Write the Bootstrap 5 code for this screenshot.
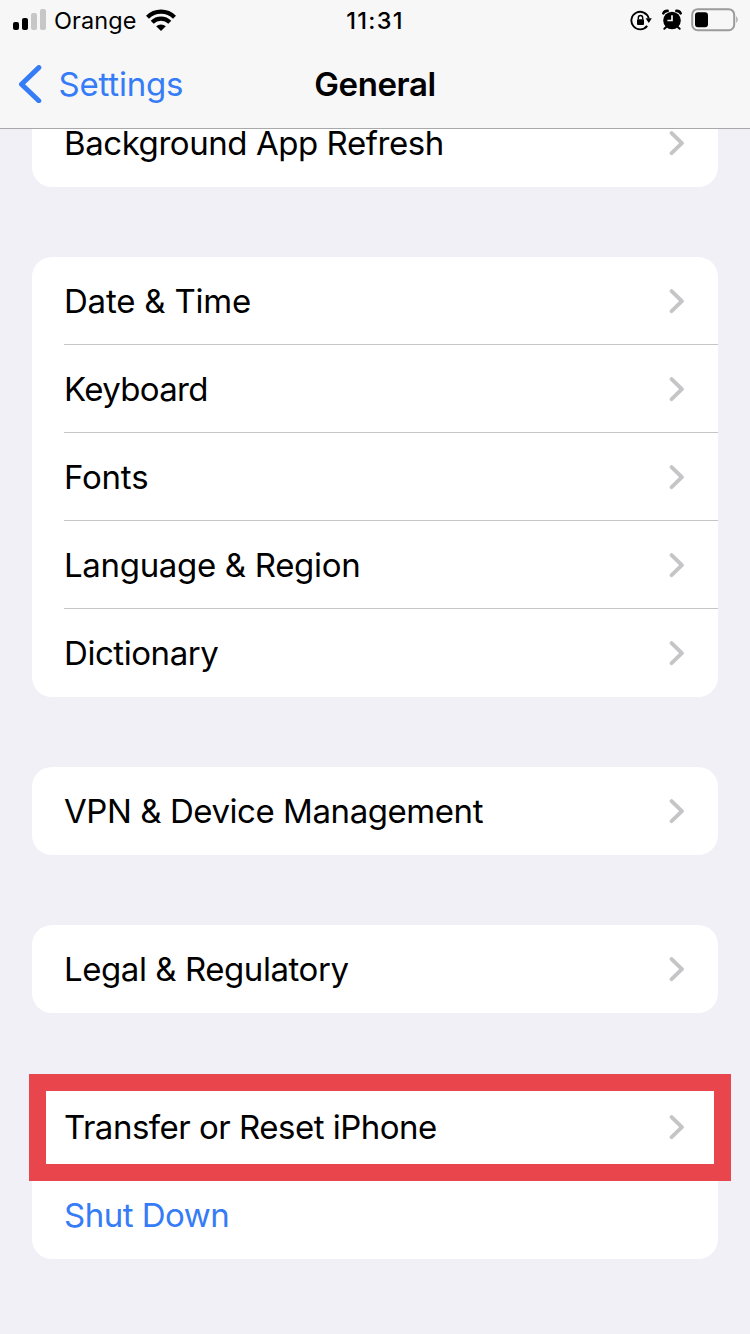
<!DOCTYPE html>
<html lang="en">
<head>
<meta charset="utf-8">
<meta name="viewport" content="width=device-width, initial-scale=1">
<title>General</title>
<link href="https://cdn.jsdelivr.net/npm/bootstrap@5.3.0/dist/css/bootstrap.min.css" rel="stylesheet">
<style>
html, body { height: 1334px; overflow: hidden; }
body { background: #f1f0f6; color: #000; font-family: Inter, "Liberation Sans", sans-serif; font-size: 33px; line-height: 40px; }
svg { display: block; flex: none; }
.top-bar { height: 129px; background: #f7f7f8; border-bottom: 1px solid #a9a9ac; z-index: 2; }
.status-row { height: 40px; font-size: 23.5px; padding: 0 11px 0 13px; }
.title-row { height: 88px; }
.ios-blue { color: #357cf6; }
.side { flex: 1 1 0; }
.carrier { letter-spacing: .1px; padding-top: 1px; }
.clock { font-weight: 550; letter-spacing: 1.3px; padding-top: 2px; margin-right: 2px; }
.page-title { font-weight: 600; font-size: 33px; letter-spacing: -.4px; padding-top: 2px; margin-right: 1px; }
.back { margin-left: 16.5px; letter-spacing: -.2px; }
.settings-groups { padding: 0 32px; gap: 70px; margin-top: -30px; letter-spacing: -.44px; }
.settings-groups .list-group { --bs-list-group-border-radius: 20px; --bs-list-group-border-width: 0; --bs-list-group-bg: #fff; border-radius: 20px; background: #fff; }
.settings-groups .list-group-item { height: 88px; padding: 0 33px 0 32px; color: #000; background-color: transparent; }
.settings-groups .list-group-item.ios-blue { color: #357cf6; }
.list-group-item.ruled { background: linear-gradient(#c6c6c8, #c6c6c8) 32px 100% / 100% 1px no-repeat; }
.callout-frame { left: -3.5px; right: -13px; top: -9px; height: 107px; border: 17px solid #e8464c; z-index: 3; }
.wide { letter-spacing: -.2px; }
.mid { letter-spacing: -.32px; }
.tight { letter-spacing: -.5px; }
.tighter { letter-spacing: -.65px; }
</style>
</head>
<body>
<header class="top-bar position-relative">
  <div class="status-row d-flex align-items-center">
    <div class="side d-flex align-items-center">
      <svg width="33" height="22" viewBox="0 0 33 22"><rect y="13" width="6" height="8" rx="2"/><rect x="9" y="9" width="6" height="12" rx="2"/><g fill="#c7c7c8"><rect x="18" y="4" width="6" height="17" rx="2"/><rect x="27" width="6" height="21" rx="2"/></g></svg>
      <span class="carrier ms-2">Orange</span>
      <svg class="wifi" style="margin-left:9px" width="30" height="22" viewBox="0 0 30 22"><g fill="none" stroke="#000" stroke-width="4.2"><path d="M1.5 8.2a19 19 0 0 1 27 0"/><path d="M6.2 13.2a12.5 12.5 0 0 1 17.6 0"/></g><path d="M10.2 17.3a7 7 0 0 1 9.6 0L15 22z"/></svg>
    </div>
    <span class="clock">11:31</span>
    <div class="side d-flex align-items-center justify-content-end">
      <svg width="22" height="22" viewBox="0 0 22 22"><path d="M17.2 16.9a8.8 8.8 0 1 1 1.5-7.6" fill="none" stroke="#000" stroke-width="1.9"/><path d="M15.6 9.3h6.2l-3 4.6z"/><rect x="7" y="10.2" width="7" height="5.8" rx="1"/><path d="M8.3 10.5V8.7a2.2 2.2 0 0 1 4.4 0v1.8" fill="none" stroke="#000" stroke-width="1.4"/></svg>
      <svg style="margin-left:10px" width="20" height="22" viewBox="0 0 20 22"><circle cx="10" cy="11.5" r="8.8"/><path d="M1.4 4.3Q2.6 1.7 5.6 1.9M18.6 4.3Q17.4 1.7 14.4 1.9" fill="none" stroke="#000" stroke-width="2.6" stroke-linecap="round"/><path d="M4.3 18l-2 1.8M15.7 18l2 1.8" stroke="#000" stroke-width="2" stroke-linecap="round"/><path d="M10 6.2v5.3H5.4" fill="none" stroke="#f7f7f8" stroke-width="1.7"/></svg>
      <svg style="margin-left:9px" width="48" height="24" viewBox="0 0 48 24"><rect x="1.2" y="1.2" width="42" height="21" rx="5.5" fill="none" stroke="#9b9b9b" stroke-width="2"/><rect x="4" y="4.2" width="13" height="15" rx="3"/><path d="M45.3 8q2.7 3.5 0 7z" fill="#9b9b9b"/></svg>
    </div>
  </div>
  <div class="title-row d-flex align-items-center">
    <div class="side d-flex align-items-center ios-blue"><svg style="margin-left:19px" width="23" height="38" viewBox="0 0 23 38"><path d="M19.8 2.6L2.5 19.2 19.8 35.8" fill="none" stroke="currentColor" stroke-width="5" stroke-linecap="round" stroke-linejoin="round"/></svg><span class="back">Settings</span></div>
    <h1 class="page-title m-0">General</h1>
    <div class="side"></div>
  </div>
</header>
<svg class="d-none"><symbol id="chev" viewBox="0 0 16 26"><path d="M2.6 3.1l10.3 10.1-10.3 10" fill="none" stroke="#c5c5c7" stroke-width="3.9" stroke-linecap="round" stroke-linejoin="round"/></symbol></svg>
<main class="settings-groups d-flex flex-column position-relative">
  <div class="list-group"><a class="list-group-item d-flex align-items-center justify-content-between"><span>Background App Refresh</span><svg width="16" height="26"><use href="#chev"/></svg></a></div>
  <div class="list-group">
    <a class="list-group-item ruled d-flex align-items-center justify-content-between"><span class="wide">Date &amp; Time</span><svg width="16" height="26"><use href="#chev"/></svg></a>
    <a class="list-group-item ruled d-flex align-items-center justify-content-between"><span class="tighter">Keyboard</span><svg width="16" height="26"><use href="#chev"/></svg></a>
    <a class="list-group-item ruled d-flex align-items-center justify-content-between"><span class="wide">Fonts</span><svg width="16" height="26"><use href="#chev"/></svg></a>
    <a class="list-group-item ruled d-flex align-items-center justify-content-between"><span class="mid">Language &amp; Region</span><svg width="16" height="26"><use href="#chev"/></svg></a>
    <a class="list-group-item d-flex align-items-center justify-content-between"><span>Dictionary</span><svg width="16" height="26"><use href="#chev"/></svg></a>
  </div>
  <div class="list-group"><a class="list-group-item d-flex align-items-center justify-content-between"><span>VPN &amp; Device Management</span><svg width="16" height="26"><use href="#chev"/></svg></a></div>
  <div class="list-group"><a class="list-group-item d-flex align-items-center justify-content-between"><span>Legal &amp; Regulatory</span><svg width="16" height="26"><use href="#chev"/></svg></a></div>
  <div class="list-group position-relative">
    <a class="list-group-item d-flex align-items-center justify-content-between"><span class="tight">Transfer or Reset iPhone</span><svg width="16" height="26"><use href="#chev"/></svg></a>
    <a class="list-group-item ios-blue d-flex align-items-center"><span class="tight">Shut Down</span></a>
    <div class="callout-frame position-absolute"></div>
  </div>
</main>
<script src="https://cdn.jsdelivr.net/npm/bootstrap@5.3.0/dist/js/bootstrap.bundle.min.js"></script>
</body>
</html>
